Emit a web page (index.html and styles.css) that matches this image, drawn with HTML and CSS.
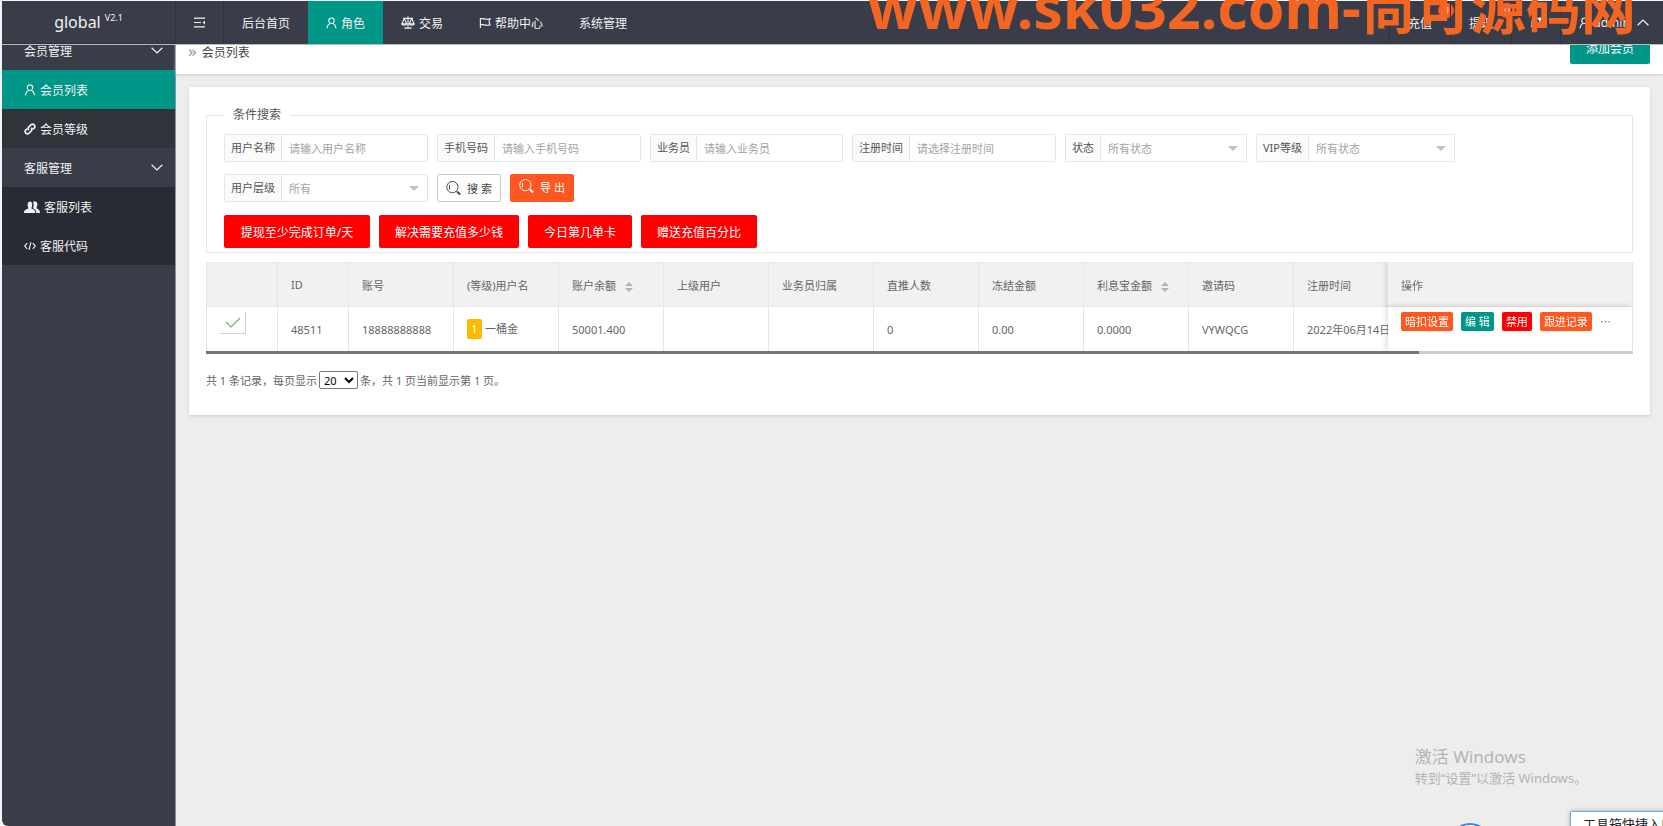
FILE: index.html
```html
<!DOCTYPE html>
<html lang="zh-CN">
<head>
<meta charset="utf-8">
<title>会员列表</title>
<link rel="stylesheet" href="styles.css">
</head>
<body>
<svg class="sprite" aria-hidden="true">
  <symbol id="i-person" viewBox="0 0 12 13"><circle cx="6" cy="4" r="3"/><path d="M1 12.4C1.400 9.400 3 7.600 4.400 6.800M11 12.400C10.600 9.400 9 7.600 7.600 6.800"/></symbol>
  <symbol id="i-down" viewBox="0 0 12 7"><path d="M.6.8 6 6 11.400.8"/></symbol>
  <symbol id="i-search" viewBox="0 0 16 16"><circle cx="6.800" cy="6.500" r="6"/><path d="M3.700 4v5M11 10.500l1.200 1.200"/><path d="m12 11.500 3 3" class="thick"/></symbol>
</svg>
<div class="app">
  <header class="topbar">
    <a class="brand" href="#">global<sup>V2.1</sup></a>
    <nav class="nav">
      <a class="nav-item split menu" href="#" aria-label="菜单"><svg class="icon i13" viewBox="0 0 13 11"><path d="M1 1.200h11M1 5.500h7M1 9.800h11"/><path d="m12 3.500-2.500 2L12 7.500z" class="solid"/></svg></a>
      <a class="nav-item" href="#">后台首页</a>
      <a class="nav-item active" href="#"><svg class="icon i11"><use href="#i-person"/></svg>角色</a>
      <a class="nav-item" href="#"><svg class="icon i14" viewBox="0 0 15 14"><path d="M7.500.5v12M3.500 13h8M2 2.600h11M3.600 2.800.8 8.500h5.400zM11.400 2.800 8.800 8.500h5.400zM.8 8.500c.5 2 4.900 2 5.400 0M8.800 8.500c.5 2 4.900 2 5.400 0"/></svg>交易</a>
      <a class="nav-item" href="#"><svg class="icon i12" viewBox="0 0 13 12"><path d="M1.500.5v11M1.500 1.500c3-1 5 1.500 10.500 0l-1.200 3.200L12 8c-5 1.300-7.500-1-10.500 0"/></svg>帮助中心</a>
      <a class="nav-item" href="#">系统管理</a>
    </nav>
    <nav class="nav nav-right">
      <a class="nav-item split" href="#">充值<span class="badge">0</span></a>
      <a class="nav-item split" href="#">提现<span class="badge">0</span></a>
      <a class="nav-item split" href="#" aria-label="消息"><svg class="icon i12" viewBox="0 0 12 12"><path d="M2 9.500V5a4 4 0 0 1 8 0v4.500zM.8 9.500h10.400M5 11.500h2"/><circle cx="10" cy="2" r="1.800" class="solid"/></svg></a>
      <a class="nav-item user" href="#"><svg class="icon i11"><use href="#i-person"/></svg>admin<svg class="icon chevron up"><use href="#i-down"/></svg></a>
    </nav>
    <div class="site-mark"><span>www.sk032.com-</span>尚可源码网</div>
  </header>
  <div class="layout">
    <aside class="sidebar">
      <a class="side-item" href="#">会员管理<svg class="icon chevron"><use href="#i-down"/></svg></a>
      <div class="submenu light">
        <a class="side-item active" href="#"><svg class="icon i12"><use href="#i-person"/></svg>会员列表</a>
        <a class="side-item" href="#"><svg class="icon i12 bold" viewBox="0 0 13 13"><path d="M5.300 7.700a2.500 2.500 0 0 1 0-3.500l2.400-2.400a2.500 2.500 0 0 1 3.500 3.500L9.700 6.800M7.700 5.300a2.500 2.500 0 0 1 0 3.500l-2.400 2.400a2.500 2.500 0 0 1-3.500-3.500l1.500-1.500"/></svg>会员等级</a>
      </div>
      <a class="side-item" href="#">客服管理<svg class="icon chevron"><use href="#i-down"/></svg></a>
      <div class="submenu">
        <a class="side-item" href="#"><svg class="icon i16 filled" viewBox="0 0 16 12"><path d="M0 12c0-3 2-3.500 3.800-4.300C5 7 4 6.300 3.600 4.500 3-.2 8.400-.8 8.200 3.500 8.200 5.500 7.300 7 7.400 7.600 10 8.800 11.200 9 11.300 12zM9 .8c4.200-1.600 5 1.700 4 4.700-.5 1.200-.8 1.800 0 2.200 1.600.8 3 1.300 3 4.300h-3.700c0-2.700-1-3.500-3.300-4.700C9.700 5.500 10 3 9 .8z"/></svg>客服列表</a>
        <a class="side-item" href="#"><svg class="icon i12" viewBox="0 0 13 10"><path d="M3.500 2 .7 5l2.800 3M9.500 2l2.800 3-2.800 3M7.500.8l-2 8.400"/></svg>客服代码</a>
      </div>
    </aside>
    <main class="content">
      <div class="crumbs">
        <h1><span>»</span>会员列表</h1>
        <button class="add" type="button">添加会员</button>
      </div>
      <section class="card">
        <form>
          <fieldset>
            <legend>条件搜索</legend>
            <div class="filters">
              <div class="field"><label for="f1">用户名称</label><input id="f1" type="text" placeholder="请输入用户名称"></div>
              <div class="field"><label for="f2">手机号码</label><input id="f2" type="text" placeholder="请输入手机号码"></div>
              <div class="field"><label for="f3">业务员</label><input id="f3" type="text" placeholder="请输入业务员"></div>
              <div class="field"><label for="f4">注册时间</label><input id="f4" type="text" placeholder="请选择注册时间"></div>
              <div class="field pick"><label for="f5">状态</label><select id="f5"><option>所有状态</option></select></div>
              <div class="field pick"><label for="f6">VIP等级</label><select id="f6"><option>所有状态</option></select></div>
              <div class="field pick"><label for="f7">用户层级</label><select id="f7"><option>所有</option></select></div>
              <button class="btn search" type="button"><svg class="icon i15"><use href="#i-search"/></svg>搜 索</button>
              <button class="btn export" type="button"><svg class="icon i15"><use href="#i-search"/></svg>导 出</button>
            </div>
            <div class="settings">
              <button type="button">提现至少完成订单/天</button>
              <button type="button">解决需要充值多少钱</button>
              <button type="button">今日第几单卡</button>
              <button type="button">赠送充值百分比</button>
            </div>
          </fieldset>
        </form>
        <div class="table-wrap">
          <table>
            <colgroup><col class="c-s"><col class="c-s"><col class="c-m"><col class="c-m"><col class="c-m"><col class="c-m"><col class="c-m"><col class="c-m"><col class="c-m"><col class="c-m"><col class="c-m"><col class="c-date"><col class="c-act"></colgroup>
            <thead>
              <tr><th></th><th>ID</th><th>账号</th><th>(等级)用户名</th><th>账户余额<i class="sort"></i></th><th>上级用户</th><th>业务员归属</th><th>直推人数</th><th>冻结金额</th><th>利息宝金额<i class="sort"></i></th><th>邀请码</th><th>注册时间</th><th class="fixed">操作</th></tr>
            </thead>
            <tbody>
              <tr>
                <td class="top"><label class="tick"><input type="checkbox" checked aria-label="选择"><svg class="icon" viewBox="0 0 16 11"><path d="m1 5 5 5L15 1"/></svg></label></td>
                <td>48511</td><td>18888888888</td><td><span class="level">1</span>一桶金</td><td>50001.400</td><td></td><td></td><td>0</td><td>0.00</td><td>0.0000</td><td>VYWQCG</td><td>2022年06月14日</td>
                <td class="top fixed"><div class="actions"><button class="orange" type="button">暗扣设置</button><button class="teal" type="button">编 辑</button><button class="red" type="button">禁用</button><button class="orange" type="button">跟进记录</button><span class="more">…</span></div></td>
              </tr>
            </tbody>
          </table>
        </div>
        <div class="track"><div class="thumb"></div></div>
        <div class="pager"><label for="size">共 1 条记录，每页显示</label><select id="size"><option>20</option></select><span>条，共 1 页当前显示第 1 页。</span></div>
      </section>
    </main>
  </div>
</div>
<div class="activate"><p>激活 Windows</p><p>转到“设置”以激活 Windows。</p></div>
<div class="bubble"></div>
<div class="tip">工具箱快捷入口</div>
</body>
</html>
```
FILE: styles.css
```css
* { box-sizing: border-box; }
html, body { height: 100%; }
body {
  margin: 0;
  overflow: hidden;
  background: #f4f6f5;
  color: #666;
  font-family: "Noto Sans", "Noto Sans CJK SC", sans-serif;
  font-size: 12px;
}
a { color: inherit; text-decoration: none; }
button, input, select { font-family: inherit; font-size: 11px; margin: 0; }
.sprite { position: absolute; width: 0; height: 0; }
.icon { flex: none; fill: none; stroke: currentColor; stroke-width: 1.2; }
.solid, .filled { fill: currentColor; stroke: none; }
.thick { stroke-width: 2.2; }
.bold { stroke-width: 1.8; }
.i11 { width: 11px; height: 12px; }
.i12 { width: 12px; height: 12px; }
.i13 { width: 13px; height: 11px; }
.i14 { width: 14px; height: 13px; }
.i15 { width: 15px; height: 15px; stroke-width: 1; }
.i16 { width: 16px; height: 12px; }
.chevron { width: 12px; height: 7px; margin-left: auto; }
.up { transform: rotate(180deg); }

.app {
  display: flex;
  flex-direction: column;
  height: 100%;
  padding: 1px 0 0 2px;
}
.topbar {
  position: relative;
  z-index: 2;
  flex: none;
  display: flex;
  height: 44px;
  background: #393d49;
  border-bottom: 1px solid #b9bbbf;
  color: #f2f2f2;
}
.brand {
  width: 174px;
  display: flex;
  justify-content: center;
  align-items: center;
  border-right: 1px solid #30333d;
  border-bottom: 1px solid #30333d;
  font-size: 16px;
}
.brand sup { align-self: flex-start; margin: 10px 0 0 4px; font-size: 9px; line-height: 14px; }
.nav { display: flex; }
.nav-right { margin-left: auto; }
.nav-item { position: relative; display: flex; align-items: center; gap: 4px; padding: 0 18px; }
.nav .menu { padding: 0 17px; }
.nav .split { border-right: 1px solid #30333d; }
.nav-right .split { border: 0; border-left: 1px solid #30333d; }
.nav .active, .sidebar .active { background: #009688; }
.nav .user { width: 103px; padding-right: 14px; border-left: 1px solid #30333d; }
.badge {
  position: absolute;
  top: 2px;
  right: -4px;
  width: 16px;
  height: 15px;
  border-radius: 8px;
  background: #ff5722;
  font-size: 10px;
  line-height: 15px;
  text-align: center;
}
.site-mark {
  position: absolute;
  right: 27px;
  bottom: 22px;
  height: 58px;
  color: #f26522;
  font-size: 55px;
  font-weight: 700;
  line-height: 88px;
  white-space: nowrap;
}
.site-mark span { font-size: 59px; line-height: 58px; }

.layout { flex: 1; display: flex; min-height: 0; margin-top: -14px; }
.sidebar {
  flex: none;
  width: 174px;
  background: #393d49;
  border-right: 1px solid #8c8f96;
  border-bottom-left-radius: 6px;
  color: #f2f2f2;
}
.side-item { display: flex; align-items: center; gap: 4px; height: 39px; padding: 0 12px 0 22px; }
.submenu { background: #282b33; }
.light { background: #303339; }
.content { flex: 1; min-width: 0; background: #ededed; }
.crumbs {
  display: flex;
  justify-content: space-between;
  align-items: flex-start;
  height: 43px;
  padding: 0 13px 0 12px;
  background: #fff;
  box-shadow: 0 1px 3px #ccc;
}
.crumbs h1 { margin: 0; font-size: 12px; font-weight: 400; line-height: 44px; color: #444; }
.crumbs span { margin-right: 5px; font-size: 17px; line-height: 20px; color: #999; }
.add { width: 80px; height: 33px; border: 0; border-radius: 2px; background: #009688; color: #fff; font-size: 12px; }

.card { margin: 13px; padding: 19px 17px 26px; background: #fff; box-shadow: 0 1px 3px #ccc; }
fieldset { min-width: 0; margin: 0; padding: 10px 17px 4px; border: 1px solid #e6e6e6; }
legend { padding: 0 9px; line-height: 18px; color: #555; }
.filters { display: flex; flex-wrap: wrap; gap: 12px 9px; }
.field { position: relative; display: flex; height: 28px; border: 1px solid #e6e6e6; border-radius: 2px; }
.field label {
  padding: 0 6px;
  background: #fbfbfb;
  border-right: 1px solid #e6e6e6;
  color: #555;
  font-size: 11px;
  line-height: 26px;
}
.field input, .field select {
  width: 145px;
  padding: 0 7px;
  border: 0;
  background: none;
  color: #a3a3a3;
  appearance: none;
}
.field input::placeholder { color: #a3a3a3; }
.pick::after {
  content: "";
  position: absolute;
  top: 11px;
  right: 8px;
  border: 5px solid transparent;
  border-top-color: #c2c2c2;
}
.btn { display: flex; justify-content: center; align-items: center; gap: 6px; width: 64px; height: 28px; padding: 0; border-radius: 2px; }
.search { border: 1px solid #c9c9c9; background: #fff; color: #444; }
.export { border: 0; padding-bottom: 3px; background: #ff5722; color: #fff; }
.settings { display: flex; gap: 9px; margin-top: 13px; }
.settings button { height: 33px; padding: 0 16px; border: 0; border-radius: 2px; background: #f00; color: #fff; font-size: 12px; }
.settings button:first-child { min-width: 146px; }

.table-wrap { margin-top: 9px; overflow: hidden; border-left: 1px solid #e6e6e6; border-right: 1px solid #e6e6e6; }
table { width: 1683px; table-layout: fixed; border-collapse: separate; border-spacing: 0; font-size: 11px; }
.c-s { width: 71px; }
.c-m { width: 105px; }
.c-act { width: 244px; }
th, td { height: 45px; padding: 0 13px; border-right: 1px solid #e6e6e6; text-align: left; white-space: nowrap; font-weight: 400; }
th { background: #f1f1f1; border-top: 1px solid #e9e9e9; border-bottom: 1px solid #e6e6e6; }
.fixed { position: sticky; right: 0; border-right: 0; box-shadow: -1px 0 7px rgba(0, 0, 0, .16); }
td { height: 44px; background: #fff; }
td.top { padding-top: 5px; vertical-align: top; }
.sort { display: inline-flex; flex-direction: column; gap: 2px; margin-left: 9px; vertical-align: middle; }
.sort::before, .sort::after { content: ""; border: 4px solid transparent; }
.sort::before { border-top: 0; border-bottom-color: #b2b2b2; }
.sort::after { border-bottom: 0; border-top-color: #b2b2b2; }
.tick { display: flex; justify-content: center; align-items: center; width: 26px; height: 22px; border-right: 1px solid #d2d2d2; border-bottom: 1px solid #d2d2d2; color: #5fb878; }
.tick input { position: absolute; opacity: 0; }
.tick svg { width: 16px; height: 11px; }
.level { display: inline-block; width: 15px; margin-right: 3px; border-radius: 2px; background: #ffb800; color: #fff; line-height: 20px; text-align: center; }
.actions { display: flex; gap: 8px; line-height: 19px; }
.actions button { height: 19px; padding: 0 4px; border: 0; border-radius: 2px; color: #fff; line-height: 19px; }
.actions .more { font-family: "Noto Sans CJK SC", sans-serif; }
.actions .orange { background: #ff5722; }
.actions .teal { background: #009688; }
.actions .red { background: #f00; }
.track { height: 3px; background: #cdcdcd; }
.thumb { width: 85%; height: 3px; background: #757575; }
.pager { display: flex; align-items: center; gap: 2px; margin-top: 17px; font-size: 11px; }
.pager select { width: 39px; height: 18px; padding: 0; border: 1px solid #767676; border-radius: 2px; background: #fff; color: #000; }

.activate { position: absolute; right: 76px; bottom: 38px; color: #b4b4b4; font-size: 13px; line-height: 20px; }
.activate p { margin: 0; }
.activate p:first-child { font-size: 17px; line-height: 22px; }
.bubble { position: absolute; right: 172px; bottom: -39px; width: 42px; height: 42px; border: 2px solid #2d8cf0; border-radius: 50%; background: #fff; }
.tip {
  position: absolute;
  right: -20px;
  bottom: -13px;
  width: 113px;
  height: 28px;
  padding-left: 12px;
  border: 1px solid #6aaef5;
  border-radius: 2px;
  background: #fff;
  box-shadow: 0 0 4px #aaa;
  color: #222;
  font-size: 13px;
  line-height: 24px;
  white-space: nowrap;
}
```
